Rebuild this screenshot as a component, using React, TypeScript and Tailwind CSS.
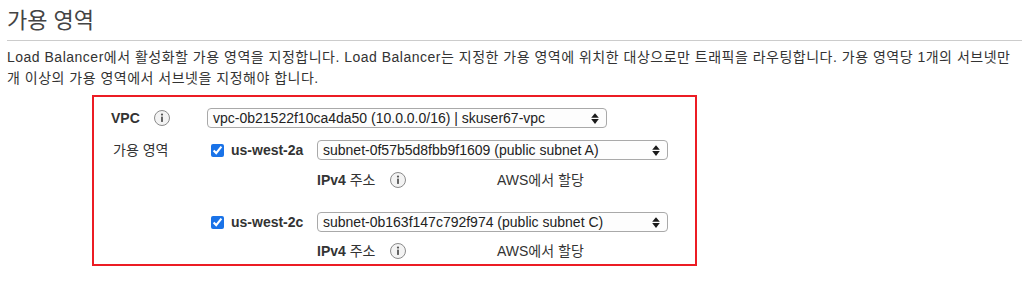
import React from 'react';

const InfoIcon: React.FC = () => (
  <svg width="16" height="16" viewBox="0 0 16 16" className="shrink-0">
    <circle cx="8" cy="8" r="7.5" fill="#f3f3f3" stroke="#8a8a8a" />
    <circle cx="8" cy="4.6" r="1.1" fill="#555" />
    <rect x="7.1" y="6.6" width="1.8" height="5.4" rx="0.4" fill="#555" />
  </svg>
);

const SelectArrow: React.FC = () => (
  <svg width="8" height="11" viewBox="0 0 8 11" className="shrink-0">
    <path d="M4 0.3 L7.8 4.7 H0.2 Z" fill="#1a1a1a" />
    <path d="M4 10.9 L7.8 6.1 H0.2 Z" fill="#1a1a1a" />
  </svg>
);

interface FakeSelectProps {
  value: string;
  width: string;
}

const FakeSelect: React.FC<FakeSelectProps> = ({ value, width }) => (
  <div
    className={`${width} h-[20px] flex items-center justify-between pl-[5px] pr-[7px] border border-[#a9a9a9] rounded-[4px] bg-[#fdfdfd] text-[14px] text-[#222] leading-none`}
  >
    <span className="whitespace-nowrap">{value}</span>
    <SelectArrow />
  </div>
);

const IpRow: React.FC = () => (
  <div className="h-[20px] flex items-center ml-[206px] text-[14px] text-[#333]">
    <span className="w-[73px] whitespace-nowrap">
      <b>IPv4</b> 주소
    </span>
    <InfoIcon />
    <span className="ml-[91px] whitespace-nowrap">AWS에서 할당</span>
  </div>
);

interface ZoneRowProps {
  zone: string;
  subnet: string;
  label?: string;
}

const ZoneRow: React.FC<ZoneRowProps> = ({ zone, subnet, label }) => (
  <div className="h-[20px] flex items-center text-[14px] text-[#333]">
    <div className="w-[96px] pl-[2px] whitespace-nowrap">{label}</div>
    <div className="w-[110px] flex items-center">
      <input
        type="checkbox"
        defaultChecked
        className="ml-[4px] w-[13px] h-[13px] accent-[#1a73e8]"
      />
      <span className="ml-[7px] font-bold whitespace-nowrap">{zone}</span>
    </div>
    <FakeSelect value={subnet} width="w-[351px]" />
  </div>
);

export default function App() {
  return (
    <div
      className="w-[1022px] h-[283px] overflow-hidden bg-white pl-[7px] text-[#333]"
      style={{ fontFamily: '"Liberation Sans", "Noto Sans CJK KR", sans-serif' }}
    >
      <h2 className="pt-[7px] h-[35px] text-[22px] leading-[28px] text-[#444] font-normal whitespace-nowrap">
        가용 영역
      </h2>
      <div className="mt-[5px] h-px bg-[#cccccc]" />
      <div className="mt-[6px] text-[14px] leading-[21px] text-[#333] whitespace-nowrap tracking-[0.5px]">
        <div>
          Load Balancer에서 활성화할 가용 영역을 지정합니다. Load Balancer는 지정한 가용 영역에 위치한 대상으로만 트래픽을 라우팅합니다. 가용 영역당 1개의 서브넷만
        </div>
        <div>개 이상의 가용 영역에서 서브넷을 지정해야 합니다.</div>
      </div>
      <div className="mt-[6px] ml-[85px] w-[605px] h-[171px] border-2 border-[#ec1c24] pt-[11px] pl-[17px]">
        <div className="h-[20px] flex items-center text-[14px] text-[#333]">
          <div className="w-[96px] flex items-center">
            <span className="w-[43px] font-bold">VPC</span>
            <InfoIcon />
          </div>
          <FakeSelect value="vpc-0b21522f10ca4da50 (10.0.0.0/16) | skuser67-vpc" width="w-[400px]" />
        </div>
        <div className="mt-[12px]">
          <ZoneRow label="가용 영역" zone="us-west-2a" subnet="subnet-0f57b5d8fbb9f1609 (public subnet A)" />
        </div>
        <div className="mt-[10px]">
          <IpRow />
        </div>
        <div className="mt-[22px]">
          <ZoneRow zone="us-west-2c" subnet="subnet-0b163f147c792f974 (public subnet C)" />
        </div>
        <div className="mt-[9px]">
          <IpRow />
        </div>
      </div>
    </div>
  );
}
